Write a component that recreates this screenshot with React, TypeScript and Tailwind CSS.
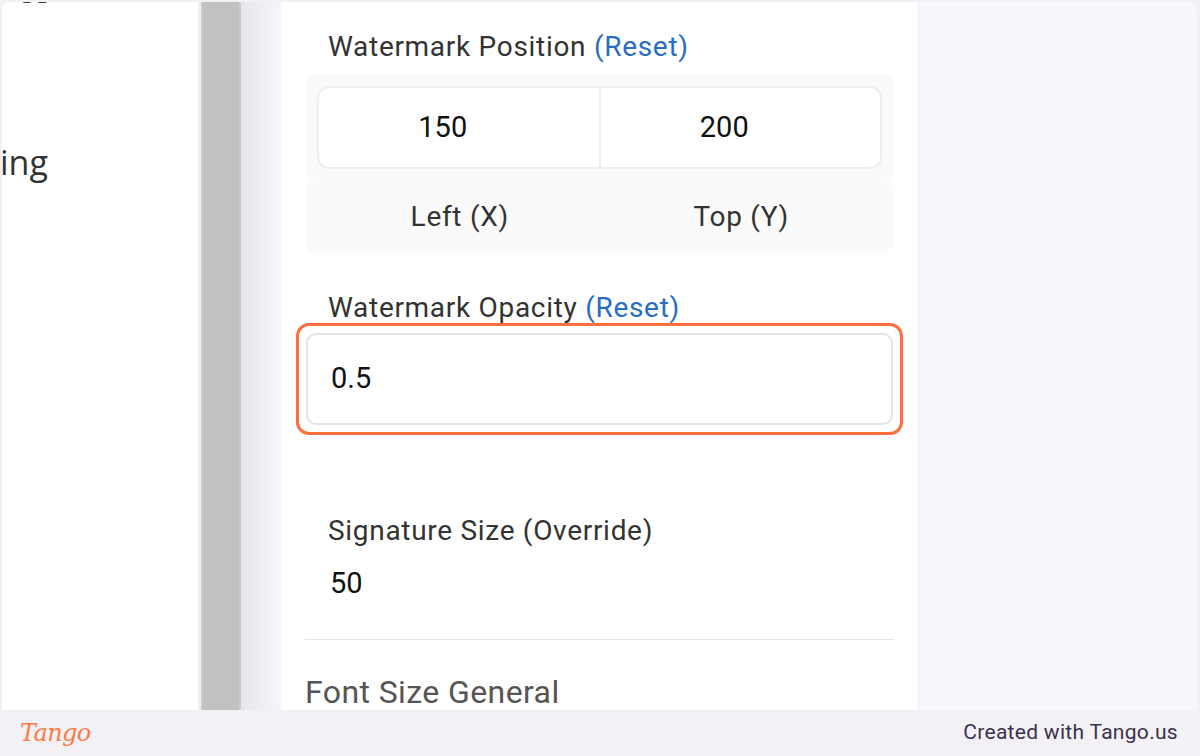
const LABEL = "font-['Roboto',sans-serif] text-[28px] leading-[32px] tracking-[0.7px] text-[#333]";

function FieldLabel({ text, link }: { text: string; link?: string }) {
	return (
		<div className={`${LABEL} pl-[23px]`}>
			{text} {link && <span className="text-[#2b6cc4]">{link}</span>}
		</div>
	);
}

export default function App() {
	return (
		<div className="flex h-[756px] w-[1200px] flex-col overflow-hidden bg-[#f3f1f6]">
			<div className="flex h-[710px] pl-[2px] pr-[3px] pt-[2px]">
				{/* Left column, clipped */}
				<div className="w-[196px] shrink-0 overflow-hidden rounded-tl-lg bg-white font-['Open_Sans',sans-serif] text-[34px] text-[#333]">
					<div className="-mt-[30px] ml-[14px] leading-[36px]">es</div>
					<div className="-ml-[2px] mt-[134px] leading-[40px]">ing</div>
				</div>

				{/* Scrollbar */}
				<div className="w-[3px] shrink-0 bg-[#f0f0f0]" />
				<div className="w-[40px] shrink-0 border-x-2 border-[#cbcbcb] bg-[#c1c1c1]" />
				<div className="w-[40px] shrink-0 bg-gradient-to-r from-[#e6e7ec] to-[#f5f6f9]" />

				{/* Settings panel */}
				<div className="flex w-[637px] shrink-0 flex-col bg-white px-[24px] pt-[29px] font-['Roboto',sans-serif]">
					<FieldLabel text="Watermark Position" link="(Reset)" />

					<div className="mt-[11px] flex flex-col">
						<div className="rounded-xl bg-[#fafafa] p-[12px]">
							<div className="flex h-[83px] rounded-xl border-2 border-[#edeef1] bg-white">
								<div className="flex flex-1 items-center justify-center border-r-2 border-[#edeef1] pr-[32px] text-[29px] text-[#111]">
									150
								</div>
								<div className="flex flex-1 items-center justify-center pr-[32px] text-[29px] text-[#111]">
									200
								</div>
							</div>
						</div>
						<div className="flex h-[72px] rounded-xl bg-[#fafafa] text-[28px] tracking-[0.7px] text-[#333]">
							<div className="flex flex-1 items-center justify-center pl-[14px]">Left (X)</div>
							<div className="flex flex-1 items-center justify-center pr-[12px]">Top (Y)</div>
						</div>
					</div>

					<div className="mt-[39px]">
						<FieldLabel text="Watermark Opacity" link="(Reset)" />
					</div>

					<div className="relative mt-[9px] ml-[1px] mr-[1px]">
						<div className="flex h-[92px] items-center rounded-[10px] border-2 border-[#e4e4e4] pl-[23px] text-[29px] text-[#111]">
							0.5
						</div>
						<div className="pointer-events-none absolute -inset-[10px] rounded-[13px] border-[3px] border-[#fd6f3d]" />
					</div>

					<div className="mt-[90px]">
						<FieldLabel text="Signature Size (Override)" />
					</div>
					<div className="mt-[18px] pl-[25px] text-[29px] leading-[36px] text-[#111]">50</div>

					<div className="mt-[38px] h-[2px] bg-[#e6e6e6]" />

					<div className="mt-[34px] text-[32px] leading-[36px] tracking-[0.4px] text-[#555]">Font Size General</div>
				</div>

				{/* Right area */}
				<div className="flex-1 rounded-tr-xl border-l border-[#eceef3] bg-[#f7f8fc]" />
			</div>

			{/* Footer */}
			<div className="flex h-[46px] items-center justify-between pl-[20px] pr-[22px]">
				<span className="font-['DejaVu_Serif',serif] text-[24px] font-light italic tracking-tight text-[#ff7a45]">
					Tango
				</span>
				<span className="font-['Roboto',sans-serif] text-[21px] tracking-[0.3px] text-[#3a3150]">
					Created with Tango.us
				</span>
			</div>
		</div>
	);
}
